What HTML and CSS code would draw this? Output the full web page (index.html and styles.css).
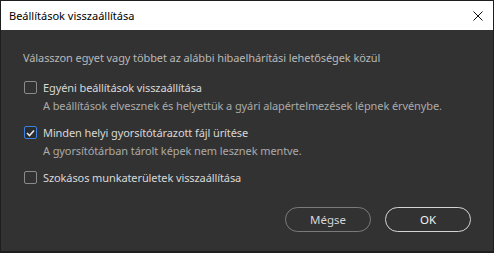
FILE: index.html
```html
<!DOCTYPE html>
<html lang="hu">
<head>
  <meta charset="UTF-8">
  <title>Beállítások visszaállítása</title>
  <link rel="stylesheet" href="styles.css">
</head>
<body>
  <div class="window">
    <div class="titlebar">
      <span class="title">Beállítások visszaállítása</span>
      <svg class="close" width="10" height="10" viewBox="0 0 10 10">
        <path d="M0.5 0.5 L9.5 9.5 M9.5 0.5 L0.5 9.5" stroke="#111" stroke-width="1" fill="none"/>
      </svg>
    </div>

    <div class="content">
      <p class="intro">Válasszon egyet vagy többet az alábbi hibaelhárítási lehetőségek közül</p>

      <div class="option">
        <span class="check"></span>
        <div class="option-text">
          <div class="label">Egyéni beállítások visszaállítása</div>
          <div class="desc">A beállítások elvesznek és helyettük a gyári alapértelmezések lépnek érvénybe.</div>
        </div>
      </div>

      <div class="option">
        <span class="check checked">
          <svg width="9" height="8" viewBox="0 0 9 8">
            <path d="M1 4 L3.5 6.5 L8 1.5" stroke="#e8e8e8" stroke-width="1.6" fill="none"/>
          </svg>
        </span>
        <div class="option-text">
          <div class="label">Minden helyi gyorsítótárazott fájl ürítése</div>
          <div class="desc">A gyorsítótárban tárolt képek nem lesznek mentve.</div>
        </div>
      </div>

      <div class="option">
        <span class="check"></span>
        <div class="option-text">
          <div class="label">Szokásos munkaterületek visszaállítása</div>
        </div>
      </div>

      <div class="buttons">
        <button type="button" class="btn">Mégse</button>
        <button type="button" class="btn primary">OK</button>
      </div>
    </div>
  </div>
</body>
</html>
```

FILE: styles.css
```css
* {
  margin: 0;
  padding: 0;
  box-sizing: border-box;
  font-family: 'Segoe UI', 'Noto Sans', sans-serif;
}

body, html {
  width: 494px;
  height: 253px;
  background-color: #1e1e1e;
}

.window {
  width: 494px;
  height: 253px;
  border: 1px solid #1e1e1e;
  border-bottom-width: 2px;
  display: flex;
  flex-direction: column;
}

.titlebar {
  height: 29px;
  background: #fff;
  display: flex;
  align-items: center;
  justify-content: space-between;
  padding: 0 10px 0 8px;
}

.title {
  font-size: 11px;
  color: #000;
}

.content {
  flex: 1;
  background-color: #323232;
  padding: 20px 22px 0 22px;
  display: flex;
  flex-direction: column;
  font-size: 11px;
  letter-spacing: -0.1px;
}

.intro {
  color: #b8b8b8;
  line-height: 16px;
  margin-bottom: 13px;
}

.option {
  display: flex;
  align-items: flex-start;
  margin-bottom: 9px;
}

.check {
  width: 13px;
  height: 13px;
  border: 1px solid #8a8a8a;
  border-radius: 2px;
  margin: 2px 6px 0 1px;
  display: flex;
  align-items: center;
  justify-content: center;
  flex-shrink: 0;
}

.check.checked {
  border-color: #3b82e0;
  background: #2c2c2c;
}

.label {
  color: #d8d8d8;
  line-height: 18px;
}

.desc {
  color: #aaaaaa;
  line-height: 18px;
}

.buttons {
  margin-top: auto;
  margin-bottom: 19px;
  display: flex;
  justify-content: flex-end;
  gap: 14px;
}

.btn {
  width: 86px;
  height: 25px;
  border-radius: 13px;
  border: 1px solid #7a7a7a;
  background: transparent;
  color: #d6d6d6;
  font-size: 11.5px;
  cursor: pointer;
}

.btn.primary {
  border-color: #d4d4d4;
  color: #f0f0f0;
}
```
